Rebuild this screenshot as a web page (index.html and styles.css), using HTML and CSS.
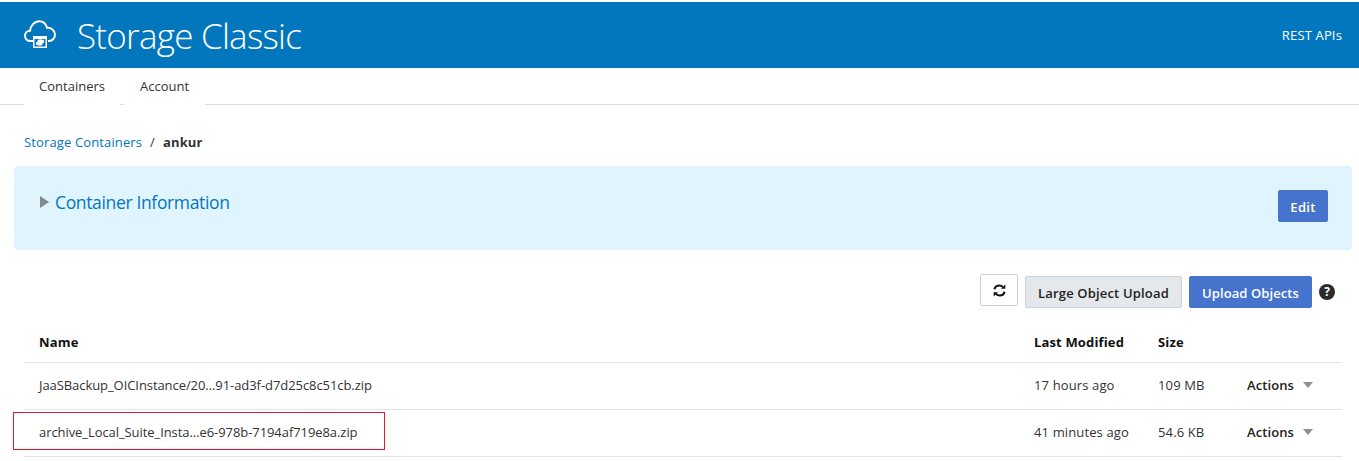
FILE: index.html
```html
<!DOCTYPE html>
<html lang="en">
<head>
  <meta charset="UTF-8" />
  <title>Storage Classic</title>
  <link rel="stylesheet" href="styles.css">
</head>
<body>
  <header class="top-bar">
    <div class="brand">
      <svg class="brand-icon" width="32" height="28" viewBox="0 0 32 28">
        <path d="M9 21H6.500C3 21 1 18.600 1 15.800 1 13 3.200 10.800 6 10.800 6.600 5.600 10.400 1.200 15 1.200c4 0 7 2.800 8 6.600 4-.4 8 2.600 8 6.700 0 3.400-2.400 6.500-6 6.500h-1" fill="none" stroke="#fff" stroke-width="2"/>
        <rect x="9" y="16" width="14" height="12" fill="#fff"/>
        <rect x="10.500" y="19" width="11" height="7.500" fill="#0277bd"/>
        <path d="M13 21.500a3.500 3.500 0 0 1 6-1l1-1v3.500h-3.500M19 23.500a3.500 3.500 0 0 1-6 1l-1 1V22h3.500" fill="#fff"/>
      </svg>
      <span class="brand-title">Storage Classic</span>
    </div>
    <a class="top-link">REST APIs</a>
  </header>

  <nav class="tabs">
    <a class="tab tab-first">Containers</a>
    <a class="tab tab-second">Account</a>
  </nav>

  <main>
    <div class="breadcrumb">
      <a>Storage Containers</a><span class="sep">/</span><b>ankur</b>
    </div>

    <section class="info-panel">
      <div class="info-title"><span class="arrow-right"></span>Container Information</div>
      <button class="btn btn-primary btn-edit">Edit</button>
    </section>

    <div class="toolbar">
      <button class="btn-refresh" aria-label="Refresh">
        <svg width="13" height="13" viewBox="0 0 13 13">
          <path d="M1.500 5.200C2 3 4 1.500 6.300 1.500c1.400 0 2.700.6 3.600 1.500" fill="none" stroke="#111" stroke-width="2.200"/>
          <path d="M12.300 .6v4.200H8.100z" fill="#111"/>
          <path d="M11.500 7.800C11 10 9 11.500 6.700 11.500c-1.400 0-2.700-.6-3.600-1.500" fill="none" stroke="#111" stroke-width="2.200"/>
          <path d="M.7 12.400V8.200h4.200z" fill="#111"/>
        </svg>
      </button>
      <button class="btn btn-secondary">Large Object Upload</button>
      <button class="btn btn-primary btn-upload">Upload Objects</button>
      <span class="help">?</span>
    </div>

    <div class="table">
      <div class="row row-head">
        <span>Name</span>
        <span>Last Modified</span>
        <span>Size</span>
        <span></span>
      </div>
      <div class="row">
        <span class="file-name">JaaSBackup_OICInstance/20...91-ad3f-d7d25c8c51cb.zip</span>
        <span>17 hours ago</span>
        <span>109 MB</span>
        <span class="actions">Actions<i class="arrow-down"></i></span>
      </div>
      <div class="row">
        <span class="file-name">archive_Local_Suite_Insta...e6-978b-7194af719e8a.zip</span>
        <span>41 minutes ago</span>
        <span>54.6 KB</span>
        <span class="actions">Actions<i class="arrow-down"></i></span>
        <div class="red-box"></div>
      </div>
    </div>
  </main>
</body>
</html>
```

FILE: styles.css
```css
body {
  font-family: "Open Sans", "Noto Sans", Arial, sans-serif;
  font-size: 13px;
  color: #333;
  background: #fff;
  margin: 0;
  padding-top: 2px;
  overflow: hidden;
}

.top-bar {
  height: 66px;
  background: #0277bd;
  color: #fff;
  display: flex;
  align-items: center;
  justify-content: space-between;
  padding: 0 17px 0 24px;
}

.brand {
  display: flex;
  align-items: center;
}

.brand-icon {
  margin-right: 21px;
  margin-top: -2px;
}

.brand-title {
  font-size: 35px;
  font-weight: 300;
  letter-spacing: -0.75px;
}

.top-link {
  font-size: 13px;
  letter-spacing: 0.15px;
}

.tabs {
  height: 36px;
  border-bottom: 1px solid #ddd;
  display: flex;
  padding-left: 24px;
}

.tab {
  height: 37px;
  background: #fff;
  line-height: 36px;
  text-align: center;
  letter-spacing: 0;
}

.tab-first {
  width: 96px;
  margin-right: 4px;
}

.tab-second {
  width: 81px;
}

.breadcrumb {
  padding: 27px 0 0 24px;
  height: 34px;
  line-height: 20px;
  letter-spacing: 0.13px;
}

.breadcrumb a {
  color: #0277bd;
}

.breadcrumb .sep {
  margin: 0 8px;
}

.breadcrumb b {
  color: #333;
}

.info-panel {
  margin: 0 7px 0 14px;
  height: 84px;
  box-sizing: border-box;
  background: #e0f4fd;
  border-radius: 4px;
  display: flex;
  justify-content: space-between;
  align-items: flex-start;
  padding: 23px 24px 0 26px;
}

.info-title {
  display: flex;
  align-items: center;
  color: #0277bd;
  font-size: 17.500px;
  line-height: 26px;
  letter-spacing: -0.35px;
}

.arrow-right {
  border-left: 9px solid #7f8c8d;
  border-top: 6.500px solid transparent;
  border-bottom: 6.500px solid transparent;
  margin-right: 6px;
}

.btn {
  font-family: inherit;
  font-size: 13px;
  font-weight: 600;
  height: 32px;
  border-radius: 2px;
  padding: 1px 0 0;
  letter-spacing: 0.1px;
  cursor: pointer;
}

.btn-primary {
  background: #4674cd;
  border: 1px solid #4674cd;
  color: #fff;
}

.btn-edit {
  width: 50px;
  margin-top: 1px;
  letter-spacing: 0.3px;
}

.btn-upload {
  width: 123px;
  margin-right: 7px;
}

.btn-secondary {
  width: 157px;
  background: #e4e8ea;
  border: 1px solid #ccd3d8;
  color: #222;
  margin-right: 7px;
  letter-spacing: 0.17px;
}

.toolbar {
  margin-top: 24px;
  padding-right: 24px;
  height: 34px;
  display: flex;
  justify-content: flex-end;
  align-items: flex-end;
}

.btn-refresh {
  width: 38px;
  height: 32px;
  background: #fff;
  border: 1px solid #ccd3d8;
  border-radius: 2px;
  padding: 0;
  margin: 0 7px 2px 0;
  display: flex;
  align-items: center;
  justify-content: center;
}

.help {
  width: 16px;
  height: 16px;
  border-radius: 50%;
  background: #2b2b2b;
  color: #fff;
  font-size: 12px;
  font-weight: 700;
  line-height: 16px;
  text-align: center;
  margin-bottom: 8px;
}

.table {
  margin: 17px 17px 0 24px;
}

.row {
  position: relative;
  display: grid;
  grid-template-columns: 1fr 124px 89px 95px;
  align-items: center;
  height: 46px;
  box-sizing: content-box;
  padding-left: 15px;
  border-bottom: 1px solid #dfe4e8;
  letter-spacing: 0.13px;
}

.row > span {
  position: relative;
  top: -1px;
}

.row-head {
  height: 37px;
  font-weight: 700;
  color: #111;
  letter-spacing: 0.15px;
}

.row-head > span {
  top: -2px;
}

.file-name {
  letter-spacing: -0.07px;
}

.actions {
  font-weight: 600;
  color: #222;
  display: flex;
  align-items: center;
  letter-spacing: 0.1px;
}

.arrow-down {
  border-top: 6px solid #8a9096;
  border-left: 5px solid transparent;
  border-right: 5px solid transparent;
  margin-left: 9px;
}

/* annotation drawn over the row */
.red-box {
  position: absolute;
  left: -11px;
  top: 2px;
  width: 370px;
  height: 36px;
  border: 1px solid #e8182c;
}
```
